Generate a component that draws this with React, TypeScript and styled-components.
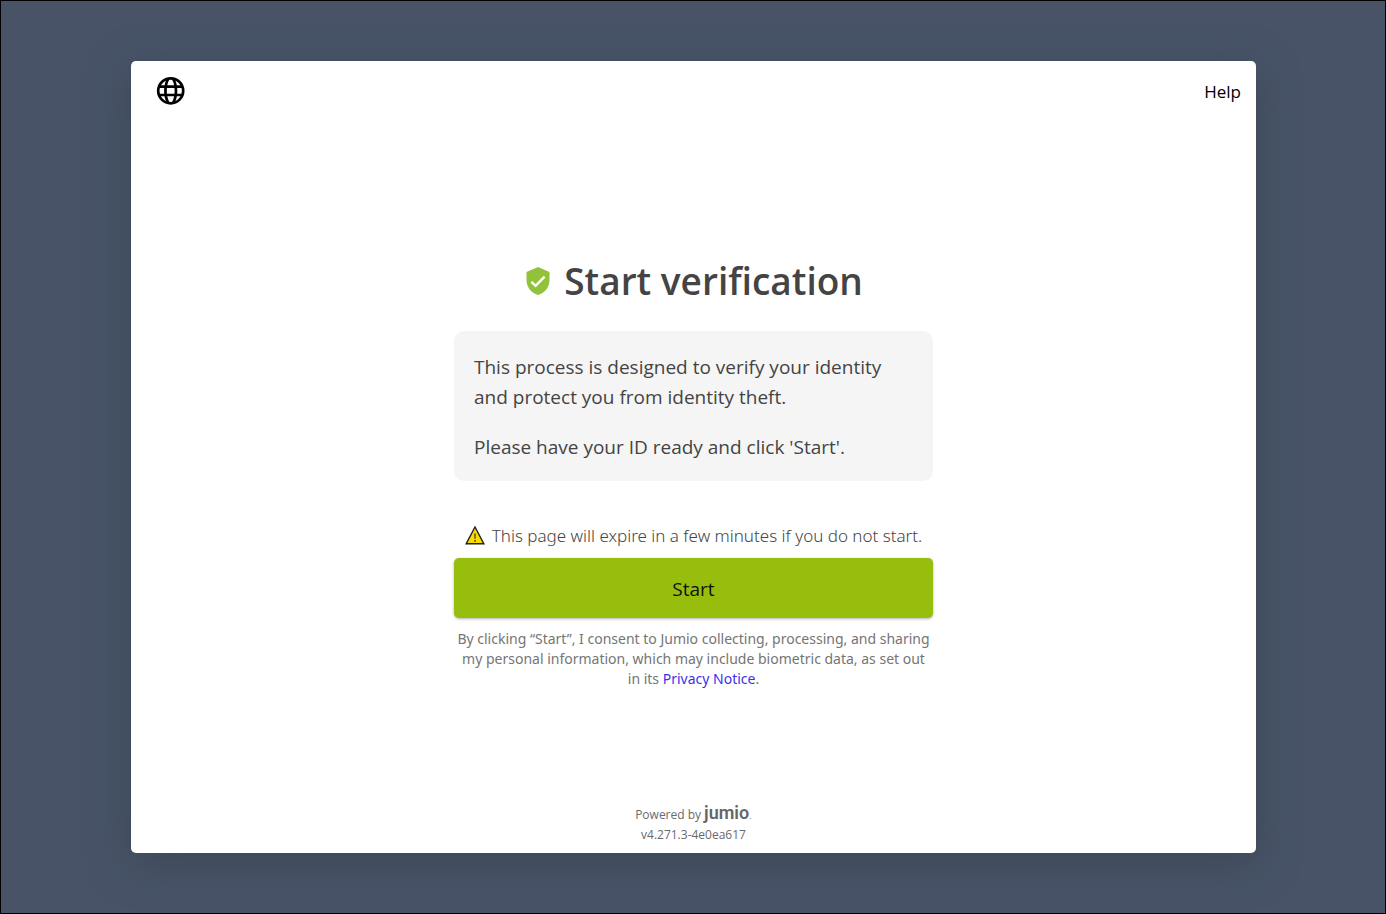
import React from 'react';
import styled, { createGlobalStyle } from 'styled-components';

const GlobalStyle = createGlobalStyle`
  *, *::before, *::after { box-sizing: border-box; }
  body {
    margin: 0;
    background: #485368;
    font-family: 'Segoe UI', 'Open Sans', 'Noto Sans', sans-serif;
    color: #444;
  }
`;

const Page = styled.div`
  display: flex;
  min-height: 100vh;
  padding: 60px 129px 60px 130px;
  border: 1px solid #000;
`;

const Card = styled.div`
  display: flex;
  flex: 1;
  flex-direction: column;
  background: #fff;
  border-radius: 5px;
  box-shadow: 0 10px 40px rgba(58, 70, 80, 0.8);
`;

const TopBar = styled.header`
  display: flex;
  align-items: center;
  justify-content: space-between;
  height: 60px;
  padding: 0 15px 0 25px;
`;

const IconButton = styled.button`
  display: flex;
  padding: 0;
  border: 0;
  background: none;
  cursor: pointer;
`;

const HelpButton = styled.button`
  padding: 1px 0 0;
  border: 0;
  background: none;
  color: #000;
  font: inherit;
  font-size: 17px;
  line-height: 24px;
  cursor: pointer;
`;

const Main = styled.main`
  display: flex;
  flex: 1;
  flex-direction: column;
  justify-content: center;
  width: 100%;
  max-width: 479px;
  margin: 0 auto;
  padding-top: 15px;
`;

const TitleRow = styled.div`
  display: flex;
  align-items: center;
  justify-content: center;
  gap: 14px;
  margin-bottom: 20px;
  padding-left: 2px;
`;

const Title = styled.h1`
  margin: 0;
  font-size: 37px;
  font-weight: 600;
  line-height: 60px;
`;

const InfoBox = styled.section`
  display: flex;
  flex-direction: column;
  gap: 20px;
  margin-bottom: 40px;
  padding: 21px 20px 19px;
  border-radius: 10px;
  background: #f5f5f5;
`;

const InfoText = styled.p`
  margin: 0;
  font-size: 19px;
  line-height: 30px;
`;

const ExpiryNote = styled.p`
  display: flex;
  align-items: center;
  justify-content: center;
  gap: 7px;
  margin: 0 0 8px;
  color: #444;
  font-family: 'Segoe UI', 'Noto Sans', sans-serif;
  font-size: 17px;
  font-weight: 300;
  line-height: 29px;
`;

const StartButton = styled.button`
  height: 60px;
  padding: 2px 0 0;
  border: 0;
  border-radius: 5px;
  background: #97be0d;
  box-shadow: 0 1px 3px rgba(0, 0, 0, 0.3);
  color: #111;
  font: inherit;
  font-size: 19px;
  cursor: pointer;
`;

const Consent = styled.p`
  margin: 11px 0 0;
  padding: 0 3px;
  color: #757575;
  font-family: 'Segoe UI', 'Noto Sans', sans-serif;
  font-size: 14px;
  line-height: 20px;
  text-align: center;
`;

const NoticeLink = styled.a`
  color: #3d31e8;
  text-decoration: none;
`;

const Footer = styled.footer`
  display: flex;
  flex-direction: column;
  align-items: center;
  padding-bottom: 8px;
  color: #6a6a6a;
  font-size: 12px;
  line-height: 20px;
`;

const PoweredBy = styled.div`
  display: flex;
  align-items: baseline;
  gap: 3px;
`;

const Brand = styled.span`
  color: #666;
  font-family: Roboto, sans-serif;
  font-size: 18px;
  font-weight: 600;
`;

const BrandDot = styled.span`
  color: #999;
  font-size: 10px;
  font-weight: 400;
  line-height: 1;
`;

const GlobeIcon = () => (
  <svg width="30" height="30" viewBox="0 0 30 30" fill="none" stroke="#000" strokeWidth="2.7" aria-hidden="true">
    <circle cx="14.7" cy="14.8" r="12.5" />
    <path d="M12.5 2.4C8.4 8.5 8.4 21 12.5 27.2M16.9 2.4C21 8.5 21 21 16.9 27.2M3 10.6H26.4M3 19H26.4" />
  </svg>
);

const ShieldIcon = () => (
  <svg width="24" height="28" viewBox="0 0 24 28" aria-hidden="true">
    <path d="M12 0 23.5 5V13C23.5 20 19 26 12 28 5 26 .5 20 .5 13V5Z" fill="#92c13a" />
    <path d="m5.4 14.8 4.2 4.1 9-9.2" fill="none" stroke="#fff" strokeWidth="2.4" />
  </svg>
);

const WarningIcon = () => (
  <svg width="20" height="20" viewBox="0 0 20 20" aria-hidden="true">
    <path d="M10 2 18.9 18.8H1.1Z" fill="#fadb00" stroke="#222" strokeWidth="1.4" />
    <path d="M9 8.5h2l-.4 5.5H9.4ZM9.1 15h1.8v1.7H9.1Z" fill="#6e6000" />
  </svg>
);

export default function App() {
  return (
    <>
      <GlobalStyle />
      <Page>
        <Card>
          <TopBar>
            <IconButton type="button" aria-label="Change language">
              <GlobeIcon />
            </IconButton>
            <HelpButton type="button">Help</HelpButton>
          </TopBar>
          <Main>
            <TitleRow>
              <ShieldIcon />
              <Title>Start verification</Title>
            </TitleRow>
            <InfoBox>
              <InfoText>This process is designed to verify your identity and protect you from identity theft.</InfoText>
              <InfoText>Please have your ID ready and click 'Start'.</InfoText>
            </InfoBox>
            <ExpiryNote>
              <WarningIcon />
              <span>This page will expire in a few minutes if you do not start.</span>
            </ExpiryNote>
            <StartButton type="button">Start</StartButton>
            <Consent>
              By clicking “Start”, I consent to Jumio collecting, processing, and sharing my personal information,
              which may include biometric data, as set out in its <NoticeLink href="#privacy">Privacy Notice</NoticeLink>.
            </Consent>
          </Main>
          <Footer>
            <PoweredBy>
              <span>Powered by</span>
              <Brand>jumio<BrandDot>.</BrandDot></Brand>
            </PoweredBy>
            <span>v4.271.3-4e0ea617</span>
          </Footer>
        </Card>
      </Page>
    </>
  );
}
